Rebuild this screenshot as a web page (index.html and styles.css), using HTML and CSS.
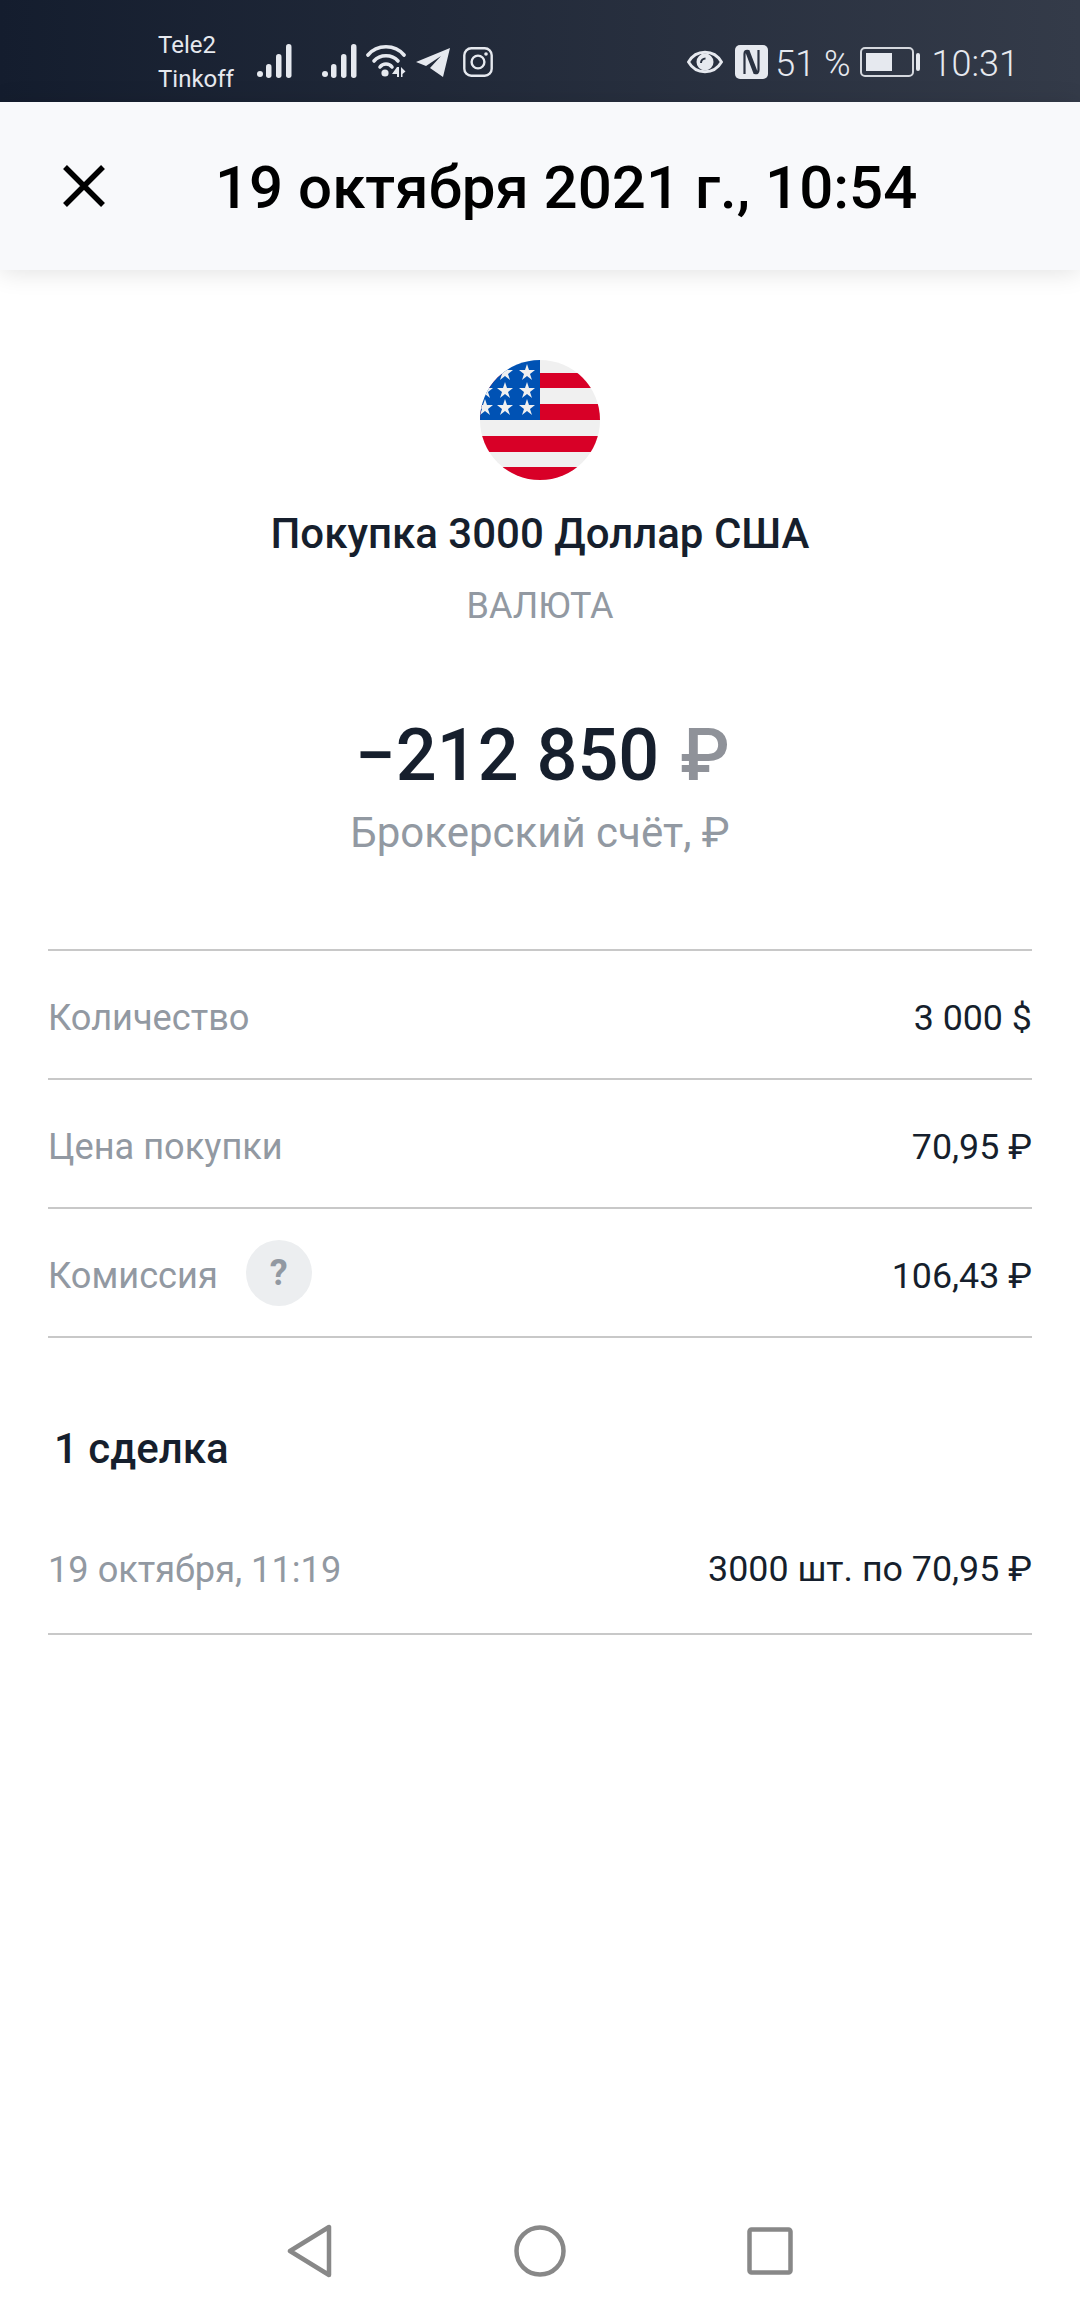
FILE: index.html
```html
<!DOCTYPE html>
<html lang="ru">
<head>
    <meta charset="UTF-8">
    <meta name="viewport" content="width=device-width, initial-scale=1.0">
    <title>Покупка 3000 Доллар США</title>
    <link rel="stylesheet" href="styles.css">
</head>
<body>
    <div class="status-bar">
        <div class="status-left">
            <div class="carriers"><span>Tele2</span><span>Tinkoff</span></div>
            <svg class="signal signal-first" viewBox="0 0 35 34"><circle cx="3" cy="30" r="3"/><rect x="9" y="20" width="5.5" height="14" rx="2.7"/><rect x="19" y="10" width="5.5" height="24" rx="2.7"/><rect x="29" y="0" width="5.5" height="34" rx="2.7"/></svg>
            <svg class="signal signal-second" viewBox="0 0 35 34"><circle cx="3" cy="30" r="3"/><rect x="9" y="20" width="5.5" height="14" rx="2.7"/><rect x="19" y="10" width="5.5" height="24" rx="2.7"/><rect x="29" y="0" width="5.5" height="34" rx="2.7"/></svg>
            <svg class="wifi" viewBox="0 0 40 34"><g fill="none" stroke="#e6e9ef" stroke-width="3.6" stroke-linecap="round"><path d="M2 11C11 0 29 0 38 11"/><path d="M8 17C14 10 26 10 32 17"/><path d="M14 23C17 19 23 19 26 23"/></g><circle cx="19" cy="29" r="3.600" fill="#e6e9ef"/><path d="M31 23 26 30h5v3h2V23zM35 23v10h1.500v-3l3-2.500z" fill="#e6e9ef"/></svg>
            <svg class="telegram" viewBox="0 0 34 30"><path d="M34 1 0 15l10 4L25 9 14 21l13 9z" fill="#e6e9ef"/></svg>
            <svg class="instagram" viewBox="0 0 30 30"><rect x="1.3" y="1.3" width="27.4" height="27.4" rx="7" fill="none" stroke="#e6e9ef" stroke-width="2.4"/><circle cx="15" cy="15" r="6.4" fill="none" stroke="#e6e9ef" stroke-width="2.4"/><circle cx="23" cy="7" r="1.8" fill="#e6e9ef"/></svg>
        </div>
        <div class="status-right">
            <svg class="eye" viewBox="0 0 36 28"><path d="M1.500 14C9 1 27 1 34.500 14 27 27 9 27 1.500 14z" fill="none" stroke="#e6e9ef" stroke-width="2.800"/><circle cx="18" cy="14" r="8.500" fill="#e6e9ef"/><path d="M14 15a4.500 4.500 0 0 1 4.500-4.500" fill="none" stroke="#2a3241" stroke-width="2"/></svg>
            <svg class="nfc" viewBox="0 0 33 34"><rect width="33" height="34" rx="5" fill="#e6e9ef"/><path d="M9.500 29V9q0-4 4-3l8 21M23.500 5v20q0 4-4 3l-8-21" fill="none" stroke="#2a3241" stroke-width="2.200"/></svg>
            <span class="battery-text">51 %</span>
            <div class="battery"><div class="battery-body"><div class="battery-fill"></div></div><div class="battery-nub"></div></div>
            <span class="clock">10:31</span>
        </div>
    </div>

    <div class="top-bar">
        <svg class="close" viewBox="0 0 42 42"><path d="M2 2l38 38M40 2 2 40" fill="none" stroke="#000" stroke-width="5.500"/></svg>
        <h1 class="top-title">19 октября 2021 г., 10:54</h1>
    </div>

    <div class="content">
        <svg class="flag" viewBox="0 0 120 120">
            <defs><clipPath id="round"><circle cx="60" cy="60" r="60"/></clipPath></defs>
            <g clip-path="url(#round)">
                <rect width="120" height="120" fill="#f0f0f0"/>
                <rect y="13" width="120" height="15" fill="#d80027"/>
                <rect y="44" width="120" height="16" fill="#d80027"/>
                <rect y="76" width="120" height="16" fill="#d80027"/>
                <rect y="107" width="120" height="13" fill="#d80027"/>
                <rect width="60" height="60" fill="#0052b4"/>
                <g fill="#f0f0f0">
                    <polygon id="star" points="47,4 49,10 55,10 50,14 52,20 47,16 42,20 44,14 39,10 45,10"/>
                    <use href="#star" x="-22"/>
                    <use href="#star" y="18"/>
                    <use href="#star" x="-22" y="18"/>
                    <use href="#star" x="-42" y="18"/>
                    <use href="#star" y="35"/>
                    <use href="#star" x="-22" y="35"/>
                    <use href="#star" x="-42" y="35"/>
                </g>
            </g>
        </svg>
        <div class="deal-title">Покупка 3000 Доллар США</div>
        <div class="deal-type">ВАЛЮТА</div>
        <div class="amount">−212 850 <span class="amount-currency">₽</span></div>
        <div class="account">Брокерский счёт, ₽</div>

        <div class="details">
            <div class="row">
                <span class="row-label">Количество</span>
                <span class="row-value">3 000 $</span>
            </div>
            <div class="row">
                <span class="row-label">Цена покупки</span>
                <span class="row-value">70,95 ₽</span>
            </div>
            <div class="row">
                <span class="row-label">Комиссия <span class="help">?</span></span>
                <span class="row-value">106,43 ₽</span>
            </div>
        </div>

        <h2 class="trades-title">1 сделка</h2>
        <div class="trade">
            <span class="row-label">19 октября, 11:19</span>
            <span class="row-value">3000 шт. по 70,95 ₽</span>
        </div>
    </div>

    <div class="nav-bar">
        <svg class="nav-icon" viewBox="0 0 46 54"><path d="M3 27 42 3v48z" fill="none" stroke="#888" stroke-width="4.500" stroke-linejoin="round"/></svg>
        <svg class="nav-icon" viewBox="0 0 52 54"><circle cx="26" cy="27" r="23.500" fill="none" stroke="#888" stroke-width="4.500"/></svg>
        <svg class="nav-icon nav-square" viewBox="0 0 46 48"><rect x="2.500" y="2.500" width="41" height="43" rx="2" fill="none" stroke="#888" stroke-width="4.500"/></svg>
    </div>
</body>
</html>
```

FILE: styles.css
```css
* {
    box-sizing: border-box;
}
body {
    font-family: Roboto, "Noto Sans", sans-serif;
    display: flex;
    flex-direction: column;
    width: 1080px;
    height: 2310px;
    margin: 0;
    background-color: #fff;
    color: #161f2d;
    overflow: hidden;
}

/* status bar */
.status-bar {
    display: flex;
    justify-content: space-between;
    align-items: center;
    height: 102px;
    padding: 22px 61px 0 158px;
    background: linear-gradient(90deg, #141d2e, #343b49);
    color: #e6e9ef;
    flex-shrink: 0;
}
.status-left,
.status-right {
    display: flex;
    align-items: center;
}
.carriers {
    display: flex;
    flex-direction: column;
    width: 99px;
    font-size: 24px;
    line-height: 34px;
}
.signal {
    width: 35px;
    height: 34px;
    fill: #e6e9ef;
    margin-top: -2px;
}
.signal-second {
    margin-left: 30px;
}
.wifi {
    width: 40px;
    height: 34px;
    margin-left: 9px;
    margin-top: -2px;
}
.telegram {
    width: 34px;
    height: 30px;
    margin-left: 10px;
}
.instagram {
    width: 30px;
    height: 30px;
    margin-left: 13px;
}
.eye {
    width: 36px;
    height: 28px;
}
.nfc {
    width: 33px;
    height: 34px;
    margin-left: 12px;
}
.battery-text {
    padding-top: 4px;
    font-size: 36px;
    margin-left: 7px;
    font-weight: 300;
}
.battery {
    display: flex;
    align-items: center;
    margin-left: 9px;
}
.battery-body {
    width: 54px;
    height: 30px;
    padding: 4px;
    border: 2px solid #d5d8de;
    border-radius: 5px;
}
.battery-fill {
    width: 26px;
    height: 100%;
    background-color: #e6e9ef;
}
.battery-nub {
    width: 4px;
    height: 18px;
    margin-left: 2px;
    border-radius: 2px;
    background-color: #e6e9ef;
}
.clock {
    padding-top: 4px;
    font-size: 36px;
    margin-left: 12px;
    font-weight: 300;
}

/* header */
.top-bar {
    display: flex;
    align-items: center;
    height: 168px;
    padding-left: 63px;
    background-color: #f8f9fb;
    box-shadow: 0 2px 24px rgba(0, 0, 0, 0.12);
    flex-shrink: 0;
}
.close {
    width: 42px;
    height: 42px;
}
.top-title {
    margin: 2px 0 0 110px;
    font-size: 60px;
    font-weight: 500;
    color: #000;
}

/* main */
.content {
    display: flex;
    flex-direction: column;
    align-items: center;
    flex-grow: 1;
    padding: 90px 48px 0;
}
.flag {
    width: 120px;
    height: 120px;
}
.deal-title {
    margin-top: 29px;
    font-size: 42px;
    font-weight: 500;
    line-height: 50px;
}
.deal-type {
    margin-top: 26px;
    font-size: 36px;
    line-height: 42px;
    color: #9299a2;
}
.amount {
    margin-top: 87px;
    padding-left: 5px;
    font-size: 72px;
    font-weight: 500;
    line-height: 84px;
}
.amount-currency {
    margin-left: 3px;
    color: #8f9299;
}
.account {
    margin-top: 10px;
    font-size: 42px;
    line-height: 50px;
    color: #9299a2;
}
.details {
    width: 100%;
    margin-top: 91px;
    border-top: 2px solid #c8c8c8;
}
.row {
    display: flex;
    justify-content: space-between;
    align-items: center;
    height: 129px;
    border-bottom: 2px solid #c8c8c8;
}
.row-label {
    display: flex;
    align-items: center;
    padding-top: 6px;
    font-size: 36.200px;
    color: #9299a2;
}
.row-value {
    padding-top: 6px;
    font-size: 35.800px;
    color: #161f2d;
}
.help {
    display: flex;
    justify-content: center;
    align-items: center;
    width: 66px;
    height: 66px;
    margin-top: -6px;
    margin-left: 28px;
    border-radius: 50%;
    background-color: #eceef0;
    font-size: 36px;
    font-weight: 700;
    color: #9299a2;
}
.trades-title {
    width: 100%;
    margin: 86px 0 25px;
    padding-left: 6px;
    font-size: 42px;
    font-weight: 500;
    line-height: 50px;
}
.trade {
    display: flex;
    justify-content: space-between;
    align-items: center;
    width: 100%;
    height: 136px;
    border-bottom: 2px solid #c8c8c8;
}

/* bottom nav */
.nav-bar {
    display: flex;
    justify-content: space-between;
    align-items: center;
    height: 118px;
    padding: 0 287px;
    flex-shrink: 0;
}
.nav-icon {
    height: 54px;
    width: auto;
}
.nav-square {
    height: 48px;
}
```
